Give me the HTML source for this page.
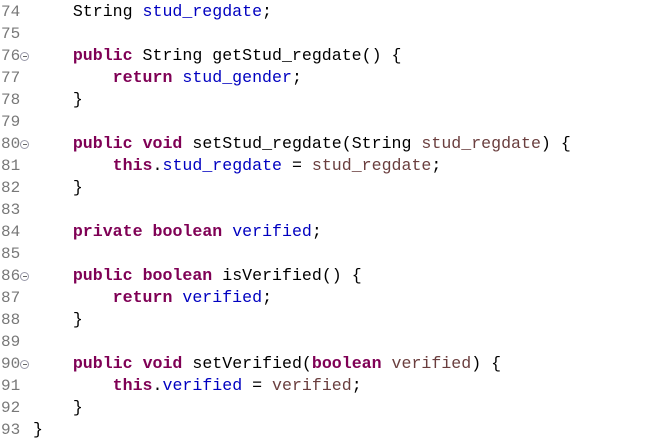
<!DOCTYPE html>
<html><head><style>
body{margin:0;background:#fff;width:661px;height:444px;overflow:hidden}
.c{position:absolute;left:0;top:1px;font-family:"Liberation Mono","DejaVu Sans Mono",monospace;font-size:16.6px;line-height:22px;color:#000}
.l{position:relative;height:22px;white-space:pre}
.n{position:absolute;left:1px;color:#787878;font-size:16px}
.f{position:absolute;left:20px;top:7px;width:7px;height:7px;border:1px solid #9a9aaa;border-radius:50%;}
.f:after{content:"";position:absolute;left:1.5px;top:3px;width:4px;height:1px;background:#666}
.t{position:absolute;left:33px}
.k{color:#7f0055;font-weight:bold}
.v{color:#0000c0}
.p{color:#6a3e3e}
</style></head><body><div class="c">
<div class="l"><span class="n">74</span><span class="t">    String <span class="v">stud_regdate</span>;</span></div>
<div class="l"><span class="n">75</span></div>
<div class="l"><span class="n">76</span><span class="f"></span><span class="t">    <span class="k">public</span> String getStud_regdate() {</span></div>
<div class="l"><span class="n">77</span><span class="t">        <span class="k">return</span> <span class="v">stud_gender</span>;</span></div>
<div class="l"><span class="n">78</span><span class="t">    }</span></div>
<div class="l"><span class="n">79</span></div>
<div class="l"><span class="n">80</span><span class="f"></span><span class="t">    <span class="k">public</span> <span class="k">void</span> setStud_regdate(String <span class="p">stud_regdate</span>) {</span></div>
<div class="l"><span class="n">81</span><span class="t">        <span class="k">this</span>.<span class="v">stud_regdate</span> = <span class="p">stud_regdate</span>;</span></div>
<div class="l"><span class="n">82</span><span class="t">    }</span></div>
<div class="l"><span class="n">83</span></div>
<div class="l"><span class="n">84</span><span class="t">    <span class="k">private</span> <span class="k">boolean</span> <span class="v">verified</span>;</span></div>
<div class="l"><span class="n">85</span></div>
<div class="l"><span class="n">86</span><span class="f"></span><span class="t">    <span class="k">public</span> <span class="k">boolean</span> isVerified() {</span></div>
<div class="l"><span class="n">87</span><span class="t">        <span class="k">return</span> <span class="v">verified</span>;</span></div>
<div class="l"><span class="n">88</span><span class="t">    }</span></div>
<div class="l"><span class="n">89</span></div>
<div class="l"><span class="n">90</span><span class="f"></span><span class="t">    <span class="k">public</span> <span class="k">void</span> setVerified(<span class="k">boolean</span> <span class="p">verified</span>) {</span></div>
<div class="l"><span class="n">91</span><span class="t">        <span class="k">this</span>.<span class="v">verified</span> = <span class="p">verified</span>;</span></div>
<div class="l"><span class="n">92</span><span class="t">    }</span></div>
<div class="l"><span class="n">93</span><span class="t">}</span></div>
</div></body></html>
